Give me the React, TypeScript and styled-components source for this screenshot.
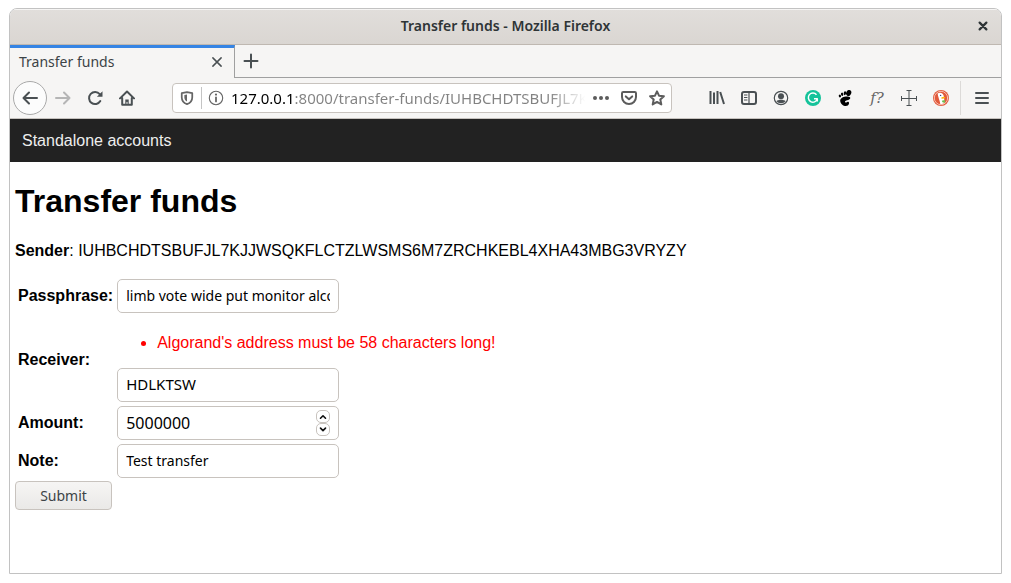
import React from "react";
import styled, { createGlobalStyle, css } from "styled-components";

const UI_FONT = `"Noto Sans", "Open Sans", sans-serif`;
const PAGE_FONT = `"Liberation Sans", Arial, sans-serif`;

const GlobalStyle = createGlobalStyle`
  *, *::before, *::after { box-sizing: border-box; }
  body { margin: 0; background: #ffffff; }
`;

const Desktop = styled.div`
  min-height: 100vh;
  padding: 8px 9px 9px;
  display: flex;
`;

const Window = styled.div`
  flex: 1;
  min-width: 0;
  display: flex;
  flex-direction: column;
  border: 1px solid #c2c2c2;
  border-radius: 8px 8px 0 0;
  background: #ffffff;
  overflow: hidden;
`;

const TitleBar = styled.header`
  height: 36px;
  display: grid;
  grid-template-columns: 34px 1fr 34px;
  align-items: center;
  padding-bottom: 1px;
  border-bottom: 1px solid #bfb8b1;
  background: linear-gradient(#e1dedb, #dad6d2);
  box-shadow: inset 0 1px #f6f5f4;
`;

const WindowTitle = styled.div`
  grid-column: 2;
  text-align: center;
  font: 600 14px/20px ${UI_FONT};
  color: #2e3436;
`;

const IconButton = styled.button<{ $w?: number; $h?: number }>`
  flex: none;
  width: ${(p) => p.$w ?? 32}px;
  height: ${(p) => p.$h ?? 32}px;
  padding: 0;
  border: 0;
  background: none;
  color: #4a5053;
  display: flex;
  align-items: center;
  justify-content: center;
`;

const TabStrip = styled.div`
  height: 33px;
  display: flex;
  background: #f6f5f4;
`;

const Tab = styled.div`
  width: 225px;
  display: flex;
  align-items: center;
  justify-content: space-between;
  padding: 0 5px 2px 9px;
  border-top: 3px solid #3584e4;
  border-right: 1px solid #a0a0a0;
  font: 14px/20px ${UI_FONT};
  color: #3c4346;
`;

const TabRest = styled.div`
  flex: 1;
  display: flex;
  border-bottom: 1px solid #a0a0a0;
`;

const ToolBar = styled.div`
  height: 41px;
  display: flex;
  align-items: center;
  padding: 0 3px;
  border-bottom: 1px solid #c6c2be;
  background: #f6f5f4;
`;

const BackButton = styled(IconButton)`
  width: 34px;
  height: 34px;
  border: 1px solid #a9a9a9;
  border-radius: 50%;
  background: #fcfcfc;
`;

const AddressBar = styled.div`
  flex: 1;
  min-width: 0;
  height: 30px;
  margin: 0 29px;
  display: flex;
  align-items: center;
  border: 1px solid #c8c3be;
  border-radius: 4px;
  background: #ffffff;
`;

const AddressDivider = styled.div`
  width: 1px;
  height: 22px;
  background: #c4c4c4;
`;

const AddressInput = styled.input`
  flex: 1;
  min-width: 0;
  height: 24px;
  margin: 0 2px 0 1px;
  padding: 0;
  border: 0;
  outline: 0;
  font: 15px/24px ${UI_FONT};
  color: transparent;
  background: linear-gradient(
    90deg,
    #000000 64px,
    #828282 64px,
    #828282 calc(100% - 36px),
    transparent 100%
  );
  background-clip: text;
  -webkit-background-clip: text;
`;

const ToolDivider = styled.div`
  width: 1px;
  height: 34px;
  margin: 0 5px 0 3px;
  background: #dcdad8;
`;

const SiteNav = styled.nav`
  height: 43px;
  padding: 0 12px;
  display: flex;
  align-items: center;
  background: #222222;
  font: 16px/20px ${PAGE_FONT};
`;

const NavLink = styled.a`
  color: #eeeeee;
  text-decoration: none;
`;

const Page = styled.main`
  padding: 21px 5px;
  font: 16px/19px ${PAGE_FONT};
  color: #000000;
`;

const Heading = styled.h1`
  margin: 0 0 21px;
  font-size: 32px;
  line-height: 37px;
`;

const Sender = styled.p`
  margin: 0 0 16px;
`;

const FieldTable = styled.table`
  border-spacing: 2px;
  th, td { padding: 1px; }
`;

const FieldLabel = styled.th`
  text-align: left;
  line-height: 18px;
`;

const Errors = styled.ul`
  margin: 16px 0;
  padding-left: 40px;
  color: #ff0000;
`;

const fieldBox = css`
  width: 222px;
  height: 34px;
  border: 1px solid #c8c3be;
  border-radius: 5px;
  background: #ffffff;
`;

const TextField = styled.input<{ $size?: number }>`
  ${fieldBox}
  display: block;
  padding: 0 8px 2px;
  font: ${(p) => p.$size ?? 14}px/20px ${UI_FONT};
  color: #000000;
`;

const NumberBox = styled.div`
  ${fieldBox}
  display: flex;
  align-items: center;
  padding: 0 8px;
`;

const NumberField = styled.input`
  flex: 1;
  min-width: 0;
  padding: 0;
  border: 0;
  outline: 0;
  background: none;
  font: 16px/20px ${UI_FONT};
  color: #000000;
  appearance: textfield;
  &::-webkit-inner-spin-button { appearance: none; margin: 0; }
`;

const Spinner = styled.div`
  display: flex;
  flex-direction: column;
`;

const SpinButton = styled(IconButton)`
  width: 14px;
  height: 13px;
  border: 1px solid #c8c3be;
  border-radius: 5px;
  color: #111111;
`;

const SubmitButton = styled.button`
  display: block;
  width: 97px;
  height: 29px;
  padding: 0;
  border: 1px solid #c8c3be;
  border-radius: 4px;
  background: linear-gradient(#f6f5f4, #eae9e7);
  font: 14px/20px ${UI_FONT};
  color: #3c4346;
`;

const Svg = ({ size = 16, children }: { size?: number; children: React.ReactNode }) => (
  <svg width={size} height={size} viewBox="0 0 16 16" fill="none" stroke="currentColor" strokeWidth="2" strokeLinecap="round" strokeLinejoin="round" aria-hidden="true">
    {children}
  </svg>
);

const BackIcon = () => <Svg><path d="M15 8H1.500M7 2.500L1.500 8L7 13.500" /></Svg>;
const ForwardIcon = () => <Svg><path d="M1 8H14.500M9 2.500L14.500 8L9 13.500" stroke="#b5b5b5" /></Svg>;
const ReloadIcon = () => (
  <Svg>
    <path d="M13.300 11A6 6 0 1 1 12.700 4.200" />
    <path d="M15.500 1.200V6.800H9.900Z" fill="currentColor" stroke="none" />
  </Svg>
);
const HomeIcon = () => (
  <Svg>
    <path d="M1 8.400L8 1.500L15 8.400M3.200 8V14.800H12.800V8" />
    <path d="M6.300 15V9.500H9.700V15Z" fill="currentColor" stroke="none" />
    <path d="M8 12.300V13.500" stroke="#f6f5f4" strokeWidth="1" />
  </Svg>
);
const ShieldIcon = () => (
  <Svg size={14}>
    <path d="M8 1.200L14 2.400V7C14 11 11.500 13.700 8 15C4.500 13.700 2 11 2 7V2.400Z" stroke="#666666" />
    <path d="M8 4V12C5.800 10.800 5 9 5 7V4.600Z" fill="#666666" stroke="none" />
  </Svg>
);
const InfoIcon = () => (
  <Svg>
    <g stroke="#666666">
      <circle cx="8" cy="8" r="6.700" strokeWidth="1.100" />
      <path d="M8 7.400V11.400" strokeWidth="1.800" />
      <circle cx="8" cy="4.600" r="1.100" fill="#666666" stroke="none" />
    </g>
  </Svg>
);
const DotsIcon = () => (
  <Svg>
    <g fill="#5c5c5c" stroke="none">
      <circle cx="2" cy="8" r="2" /><circle cx="8" cy="8" r="2" /><circle cx="14" cy="8" r="2" />
    </g>
  </Svg>
);
const PocketIcon = () => (
  <Svg>
    <g stroke="#5c5c5c">
      <path d="M2.300 2H13.700Q15 2 15 3.300V7A7 7 0 0 1 1 7V3.300Q1 2 2.300 2Z" />
      <path d="M4.800 6.400L8 9.300L11.200 6.400" />
    </g>
  </Svg>
);
const StarIcon = () => <Svg><path d="M8 1.300L10 5.700L14.900 6.200L11.300 9.500L12.300 14.400L8 11.900L3.700 14.400L4.700 9.500L1.100 6.200L6 5.700Z" stroke="#5c5c5c" strokeWidth="2" /></Svg>;
const LibraryIcon = () => <Svg><path d="M1.500 1V14M5 2.500V14M8.500 1V14M11.200 2L15 14" strokeLinecap="butt" /></Svg>;
const SidebarIcon = () => (
  <Svg>
    <rect x="1" y="2" width="14" height="12" rx="2" />
    <path d="M8 2V14" strokeWidth="1.200" />
    <path d="M3.400 5H6M3.400 7.500H6M3.400 10H6" strokeWidth="1" />
  </Svg>
);
const AccountIcon = () => (
  <Svg>
    <circle cx="8" cy="8" r="6.700" strokeWidth="1.200" />
    <circle cx="8" cy="6.200" r="3" fill="currentColor" stroke="none" />
    <path d="M3.400 11.200C5 9.200 11 9.200 12.600 11.200Q11 13.300 8 13.300Q5 13.300 3.400 11.200Z" fill="currentColor" stroke="none" />
  </Svg>
);
const GrammarIcon = () => (
  <Svg>
    <circle cx="8" cy="8" r="8" fill="#15c39a" stroke="none" />
    <path d="M11.500 4.700A4.600 4.600 0 1 0 12.300 9M9 8.800H12.300V11.500" stroke="#ffffff" strokeWidth="1.500" strokeLinecap="butt" />
  </Svg>
);
const FootIcon = () => (
  <Svg>
    <g fill="#000000" stroke="none">
      <ellipse cx="11.700" cy="3" rx="2.400" ry="3.100" transform="rotate(28 11.700 3)" />
      <ellipse cx="7.900" cy="3.200" rx="1.200" ry="2" transform="rotate(8 7.900 3.200)" />
      <ellipse cx="5.100" cy="4.300" rx="1.100" ry="1.700" transform="rotate(-12 5.100 4.300)" />
      <ellipse cx="2.900" cy="6" rx="1.100" ry="1.400" transform="rotate(-25 2.900 6)" />
      <path d="M13 7.300C11 5.500 3 6.800 3.200 10.700C3.300 13.700 6.200 16 8.900 16C12.100 16 12.900 12.400 11.200 11.800C9.900 11.400 9.500 13 8.500 12.500C7.400 12 7.900 11 9.300 10.600C11.800 10 14 9 13 7.300Z" />
    </g>
  </Svg>
);
const CrossIcon = () => <Svg><path d="M8 0.500V15.500M0.500 8.500H15.500M5.500 0.500H10.500M5.500 15.500H10.500M0.500 6V11M15.500 6V11" strokeWidth="1" strokeLinecap="butt" /></Svg>;
const DuckIcon = () => (
  <Svg>
    <circle cx="8" cy="8" r="8" fill="#e2593a" stroke="none" />
    <circle cx="8" cy="8" r="6.700" stroke="#f7cabd" strokeWidth="0.900" />
    <path d="M4.600 3.600C6.500 1.800 10.600 2.600 10.900 6.500L11.600 13Q9.500 14.300 7.300 13.900C6.800 10.500 5 7 4.600 3.600Z" fill="#ffffff" stroke="none" />
    <path d="M8.500 7.300Q11 6.400 12.500 7.200Q10.800 9.200 8.400 8.700Z" fill="#fdb80a" stroke="none" />
    <path d="M8.800 10.800L11.800 10V13L9.500 12.300Z" fill="#65bc46" stroke="none" />
    <circle cx="7.600" cy="5.400" r="0.700" fill="#2d4f8e" stroke="none" />
  </Svg>
);
const MenuIcon = () => <Svg><path d="M2 3H14M2 8H14M2 13H14" /></Svg>;
const PlusIcon = () => <Svg><path d="M8 1.500V14.500M1.500 8H14.500" /></Svg>;
const CloseIcon = () => <Svg size={12}><path d="M2.500 2.500L13.500 13.500M13.500 2.500L2.500 13.500" /></Svg>;
const WindowCloseIcon = () => <Svg size={12}><path d="M3.500 3.500L12.500 12.500M12.500 3.500L3.500 12.500" stroke="#2e3436" strokeWidth="3" /></Svg>;
const UpIcon = () => <Svg size={10}><path d="M4 10L8 6L12 10" strokeWidth="2.600" /></Svg>;
const DownIcon = () => <Svg size={10}><path d="M4 5L8 9L12 5" strokeWidth="2.600" /></Svg>;

const FormulaText = styled.span`
  font: italic 15px/16px "DejaVu Serif", serif;
  color: #666666;
`;

const addons = [
  { label: "Library", icon: <LibraryIcon /> },
  { label: "Sidebars", icon: <SidebarIcon /> },
  { label: "Account", icon: <AccountIcon /> },
  { label: "Grammar checker", icon: <GrammarIcon /> },
  { label: "GNOME Shell integration", icon: <FootIcon /> },
  { label: "Font finder", icon: <FormulaText>f?</FormulaText> },
  { label: "Measure", icon: <CrossIcon /> },
  { label: "Privacy", icon: <DuckIcon /> },
];

export default function App() {
  const amount = React.useRef<HTMLInputElement>(null);
  return (
    <>
      <GlobalStyle />
      <Desktop>
        <Window>
          <TitleBar>
            <WindowTitle>Transfer funds - Mozilla Firefox</WindowTitle>
            <IconButton aria-label="Close window"><WindowCloseIcon /></IconButton>
          </TitleBar>
          <TabStrip>
            <Tab>
              Transfer funds
              <IconButton $w={24} $h={24} aria-label="Close tab"><CloseIcon /></IconButton>
            </Tab>
            <TabRest>
              <IconButton aria-label="New tab"><PlusIcon /></IconButton>
            </TabRest>
          </TabStrip>
          <ToolBar>
            <BackButton aria-label="Back"><BackIcon /></BackButton>
            <IconButton aria-label="Forward"><ForwardIcon /></IconButton>
            <IconButton aria-label="Reload"><ReloadIcon /></IconButton>
            <IconButton aria-label="Home"><HomeIcon /></IconButton>
            <AddressBar>
              <IconButton $w={28} $h={28} aria-label="Tracking protection"><ShieldIcon /></IconButton>
              <AddressDivider />
              <IconButton $w={28} $h={28} aria-label="Site information"><InfoIcon /></IconButton>
              <AddressInput
                aria-label="Address"
                readOnly
                value="127.0.0.1:8000/transfer-funds/IUHBCHDTSBUFJL7KJJWSQKFLCTZLWSMS6M7ZRCHKEBL4XHA43MBG3VRYZY"
              />
              <IconButton $w={28} $h={28} aria-label="Page actions"><DotsIcon /></IconButton>
              <IconButton $w={28} $h={28} aria-label="Save to Pocket"><PocketIcon /></IconButton>
              <IconButton $w={28} $h={28} aria-label="Bookmark"><StarIcon /></IconButton>
            </AddressBar>
            {addons.map((a) => (
              <IconButton key={a.label} aria-label={a.label}>{a.icon}</IconButton>
            ))}
            <ToolDivider />
            <IconButton aria-label="Menu"><MenuIcon /></IconButton>
          </ToolBar>
          <SiteNav>
            <NavLink href="#">Standalone accounts</NavLink>
          </SiteNav>
          <Page>
            <Heading>Transfer funds</Heading>
            <Sender>
              <strong>Sender</strong>: IUHBCHDTSBUFJL7KJJWSQKFLCTZLWSMS6M7ZRCHKEBL4XHA43MBG3VRYZY
            </Sender>
            <form onSubmit={(e) => e.preventDefault()}>
              <FieldTable>
                <tbody>
                  <tr>
                    <FieldLabel><label htmlFor="passphrase">Passphrase:</label></FieldLabel>
                    <td><TextField id="passphrase" defaultValue="limb vote wide put monitor alcohol" /></td>
                  </tr>
                  <tr>
                    <FieldLabel><label htmlFor="receiver">Receiver:</label></FieldLabel>
                    <td>
                      <Errors><li>Algorand's address must be 58 characters long!</li></Errors>
                      <TextField id="receiver" $size={15} defaultValue="HDLKTSW" />
                    </td>
                  </tr>
                  <tr>
                    <FieldLabel><label htmlFor="amount">Amount:</label></FieldLabel>
                    <td>
                      <NumberBox>
                        <NumberField ref={amount} id="amount" type="number" defaultValue="5000000" />
                        <Spinner>
                          <SpinButton type="button" aria-label="Increase" onClick={() => amount.current?.stepUp()}><UpIcon /></SpinButton>
                          <SpinButton type="button" aria-label="Decrease" onClick={() => amount.current?.stepDown()}><DownIcon /></SpinButton>
                        </Spinner>
                      </NumberBox>
                    </td>
                  </tr>
                  <tr>
                    <FieldLabel><label htmlFor="note">Note:</label></FieldLabel>
                    <td><TextField id="note" defaultValue="Test transfer" /></td>
                  </tr>
                </tbody>
              </FieldTable>
              <SubmitButton type="submit">Submit</SubmitButton>
            </form>
          </Page>
        </Window>
      </Desktop>
    </>
  );
}
